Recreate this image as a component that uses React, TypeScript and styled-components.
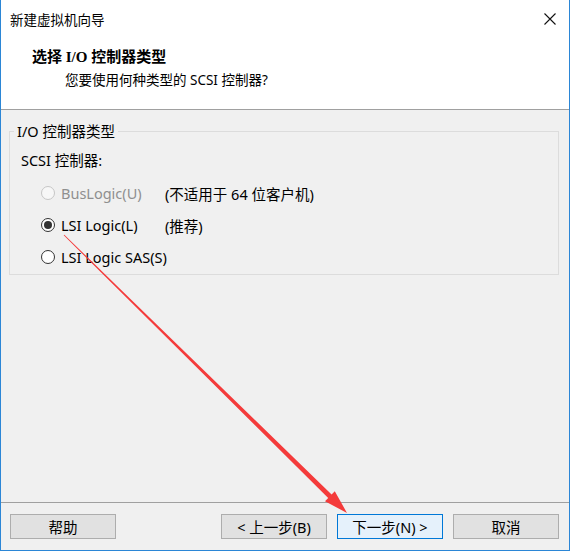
import styled, { createGlobalStyle } from 'styled-components';

const GlobalStyle = createGlobalStyle`
  html, body {
    margin: 0;
    padding: 0;
    background: #ffffff;
  }
  * {
    box-sizing: border-box;
  }
`;

const FONT = `"Noto Sans", "Noto Sans CJK SC", sans-serif`;

type RadioState = 'disabled' | 'checked' | 'unchecked';

const options: { label: string; note?: string; state: RadioState }[] = [
  { label: 'BusLogic(U)', note: '(不适用于 64 位客户机)', state: 'disabled' },
  { label: 'LSI Logic(L)', note: '(推荐)', state: 'checked' },
  { label: 'LSI Logic SAS(S)', state: 'unchecked' },
];

const App = () => {
  return (
    <>
      <GlobalStyle />
      <Window>
        <TitleBar>
          <TitleText>新建虚拟机向导</TitleText>
          <CloseIcon viewBox="0 0 12 12">
            <path d="M0.5 0.5 L11.5 11.5 M11.5 0.5 L0.5 11.5" stroke="#111" strokeWidth="1.1" />
          </CloseIcon>
        </TitleBar>

        <Header>
          <HeaderTitle>选择 I/O 控制器类型</HeaderTitle>
          <HeaderSub>您要使用何种类型的 SCSI 控制器?</HeaderSub>
        </Header>

        <Body>
          <GroupBox>
            <Legend>I/O 控制器类型</Legend>
            <FieldLabel>SCSI 控制器:</FieldLabel>
            {options.map(o => (
              <RadioRow key={o.label}>
                <RadioLabel disabled={o.state === 'disabled'}>
                  <RadioCircle state={o.state} />
                  {o.label}
                </RadioLabel>
                <Note>{o.note}</Note>
              </RadioRow>
            ))}
          </GroupBox>
        </Body>

        <Footer>
          <Button>帮助</Button>
          <Spacer />
          <Button>&lt; 上一步(B)</Button>
          <Button primary>下一步(N) &gt;</Button>
          <Button>取消</Button>
        </Footer>

        {/* red annotation arrow drawn over the dialog */}
        <ArrowLayer viewBox="0 0 570 551">
          <polygon
            points="64.3,234.7 331.6,494.4 334.8,491.2 347,513 325,501.2 328.2,498 63.7,235.3"
            fill="#f43b3b"
          />
        </ArrowLayer>
      </Window>
    </>
  );
};

const Window = styled.div`
  position: relative;
  width: 570px;
  height: 551px;
  display: flex;
  flex-direction: column;
  background: #ffffff;
  border: 1px solid #2b86d6;
  border-top: none;
  font-family: ${FONT};
  font-size: 13.5px;
  color: #000;
`;

const TitleBar = styled.div`
  height: 38px;
  display: flex;
  align-items: center;
  justify-content: space-between;
  padding: 0 13px 0 9px;
`;

const TitleText = styled.div`
  font-family: "Noto Sans CJK SC", sans-serif;
  font-size: 13.5px;
`;

const CloseIcon = styled.svg`
  width: 12px;
  height: 12px;
`;

const Header = styled.div`
  height: 72px;
  padding: 9px 0 0 31px;
  border-bottom: 1px solid #a0a0a0;
  background: #ffffff;
`;

const HeaderTitle = styled.div`
  font-family: "Liberation Serif", "Noto Sans CJK SC", serif;
  font-weight: bold;
  font-size: 15px;
  line-height: 20px;
`;

const HeaderSub = styled.div`
  padding-left: 33px;
  margin-top: 3px;
  line-height: 20px;
`;

const Body = styled.div`
  flex: 1;
  background: #f0f0f0;
  padding: 12px 10px 0 8px;
  font-size: 14.5px;
`;

const GroupBox = styled.fieldset`
  margin: 0;
  border: 1px solid #dcdcdc;
  padding: 0 10px 1px 11px;
`;

const Legend = styled.legend`
  padding: 0 3px;
  margin-left: -7px;
  line-height: 18px;
`;

const FieldLabel = styled.div`
  margin-top: 10px;
  line-height: 20px;
  margin-bottom: 7px;
`;

const RadioRow = styled.div`
  height: 32px;
  display: grid;
  grid-template-columns: 124px 1fr;
  align-items: center;
  padding-left: 20px;
  white-space: nowrap;
`;

const RadioLabel = styled.div<{ disabled?: boolean }>`
  display: flex;
  align-items: center;
  gap: 6px;
  white-space: nowrap;
  color: ${({ disabled }) => (disabled ? '#8f8f8f' : '#000')};
`;

const RadioCircle = styled.span<{ state: RadioState }>`
  width: 14px;
  height: 14px;
  border-radius: 50%;
  flex-shrink: 0;
  display: flex;
  align-items: center;
  justify-content: center;
  background: ${({ state }) => (state === 'disabled' ? '#f7f7f7' : '#ffffff')};
  border: 1px solid ${({ state }) => (state === 'disabled' ? '#c6c6c6' : '#333333')};
  &::after {
    content: '';
    width: 8px;
    height: 8px;
    border-radius: 50%;
    background: #333333;
    display: ${({ state }) => (state === 'checked' ? 'block' : 'none')};
  }
`;

const Note = styled.div`
  white-space: nowrap;
`;

const Footer = styled.div`
  height: 48px;
  display: flex;
  gap: 10px;
  padding: 11px 10px 0 9px;
  border-top: 1px solid #a0a0a0;
  background: #f0f0f0;
  font-size: 14.5px;
`;

const Spacer = styled.div`
  flex: 1;
`;

const Button = styled.div<{ primary?: boolean }>`
  width: 106px;
  height: 25px;
  display: flex;
  align-items: center;
  justify-content: center;
  border: 1px solid ${({ primary }) => (primary ? '#0078d7' : '#adadad')};
  background: ${({ primary }) => (primary ? '#e5f1fb' : '#e1e1e1')};
  white-space: nowrap;
`;

const ArrowLayer = styled.svg`
  position: absolute;
  left: -1px;
  top: 0;
  width: 570px;
  height: 551px;
  pointer-events: none;
`;

export default App;
